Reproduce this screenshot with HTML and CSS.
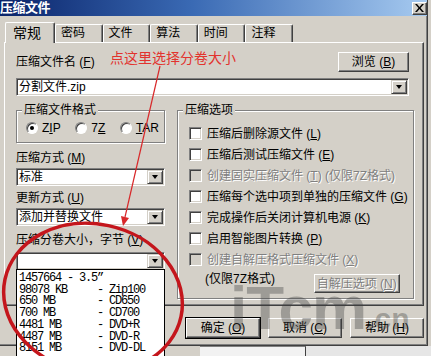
FILE: index.html
```html
<!DOCTYPE html>
<html lang="zh-CN">
<head>
    <meta charset="UTF-8">
    <title>压缩文件</title>
    <link rel="stylesheet" href="styles.css">
</head>
<body>
    <div class="dialog">
        <div class="titlebar">
            <span class="title">压缩文件</span>
            <span class="close">
                <svg width="9" height="8" viewBox="0 0 9 8"><path d="M0 0h2l2.5 3 2.5-3h2l-3.5 4 3.5 4h-2l-2.5-3-2.5 3h-2l3.5-4z" fill="#000"/></svg>
            </span>
        </div>

        <!-- Tabs -->
        <div class="tabs">
            <div class="tab active">常规</div>
            <div class="tab">密码</div>
            <div class="tab">文件</div>
            <div class="tab">算法</div>
            <div class="tab">时间</div>
            <div class="tab">注释</div>
        </div>

        <div class="panel">
            <div class="name-row">
                <span>压缩文件名 (<u>F</u>)</span>
                <button class="btn browse">浏览 (<u>B</u>)</button>
            </div>
            <div class="combo wide"><span class="combo-text">分割文件.zip</span><span class="arrow"></span></div>

            <div class="cols">
                <div class="col-left">
                    <fieldset class="group format">
                        <legend>压缩文件格式</legend>
                        <div class="radios">
                            <label class="radio r-zip"><span class="dot on"></span><span>Z<u>I</u>P</span></label>
                            <label class="radio r-7z"><span class="dot"></span><span>7<u>Z</u></span></label>
                            <label class="radio"><span class="dot"></span><span><u>T</u>AR</span></label>
                        </div>
                    </fieldset>

                    <div class="field-label first">压缩方式 (<u>M</u>)</div>
                    <div class="combo"><span class="combo-text">标准</span><span class="arrow"></span></div>

                    <div class="field-label">更新方式 (<u>U</u>)</div>
                    <div class="combo"><span class="combo-text">添加并替换文件</span><span class="arrow"></span></div>

                    <div class="field-label last">压缩分卷大小，字节 (<u>V</u>)</div>
                    <div class="combo"><span class="combo-text"></span><span class="arrow"></span></div>
                </div>

                <div class="col-right">
                    <fieldset class="group options">
                        <legend>压缩选项</legend>
                        <div class="check-row"><span class="check"></span><span>压缩后删除源文件 (<u>L</u>)</span></div>
                        <div class="check-row"><span class="check"></span><span>压缩后测试压缩文件 (<u>E</u>)</span></div>
                        <div class="check-row disabled"><span class="check"></span><span>创建固实压缩文件 (<u>T</u>) (仅限7Z格式)</span></div>
                        <div class="check-row"><span class="check"></span><span>压缩每个选中项到单独的压缩文件 (<u>G</u>)</span></div>
                        <div class="check-row"><span class="check"></span><span>完成操作后关闭计算机电源 (<u>K</u>)</span></div>
                        <div class="check-row"><span class="check"></span><span>启用智能图片转换 (<u>P</u>)</span></div>
                        <div class="check-row disabled"><span class="check"></span><span>创建自解压格式压缩文件 (<u>X</u>)</span></div>
                        <div class="sfx-row">
                            <span>(仅限7Z格式)</span>
                            <button class="btn sfx" disabled>自解压选项 (<u>N</u>)</button>
                        </div>
                    </fieldset>
                </div>
            </div>
        </div>

        <div class="buttons">
            <button class="btn action default">确定 (<u>O</u>)</button>
            <button class="btn action">取消 (<u>C</u>)</button>
            <button class="btn action">帮助 (<u>H</u>)</button>
        </div>
    </div>

    <div class="under">
        <div class="under-gray"></div>
        <div class="under-box"></div>
        <div class="under-dither"></div>
    </div>

    <!-- Open dropdown list of the volume size combo -->
    <div class="listbox">
        <div class="item">1457664 - 3.5”</div>
        <div class="item">98078 KB     - Zip100</div>
        <div class="item">650 MB       - CD650</div>
        <div class="item">700 MB       - CD700</div>
        <div class="item">4481 MB      - DVD+R</div>
        <div class="item">4487 MB      - DVD-R</div>
        <div class="item">8151 MB      - DVD-DL</div>
    </div>

    <!-- Annotations drawn over the screenshot -->
    <div class="note">点这里选择分卷大小</div>
    <svg class="marks" width="431" height="356" viewBox="0 0 431 356">
        <line x1="160" y1="66" x2="125" y2="217" stroke="#d8282a" stroke-width="1.2"/>
        <polygon points="123,226 121,216 129,218" fill="#d8282a"/>
        <ellipse cx="93" cy="298" rx="90" ry="74" transform="rotate(12 93 298)" fill="none" stroke="#c4161c" stroke-width="3.5"/>
    </svg>

    <div class="watermark">iTcm<span class="wm-small">.cn</span></div>
</body>
</html>
```

FILE: styles.css
```css
* {
    box-sizing: border-box;
}

body {
    margin: 0;
    width: 431px;
    height: 356px;
    overflow: hidden;
    position: relative;
    background: #d4d0c8;
    color: #000;
    font: 12px/14px "Liberation Sans", "Noto Sans CJK SC", sans-serif;
}

u {
    text-decoration: underline;
    text-underline-offset: 1px;
}

/* Dialog frame */
.dialog {
    width: 428px;
    height: 346px;
    border-right: 1px solid #404040;
    border-bottom: 1px solid #404040;
    box-shadow: inset -1px -1px 0 #808080;
}

.titlebar {
    height: 16px;
    display: flex;
    justify-content: space-between;
    align-items: center;
    background: linear-gradient(to right, #0a246a, #3a6ab4 45%, #a6caf0);
}

.title {
    color: #fff;
    font-weight: bold;
    font-size: 13px;
    line-height: 16px;
    letter-spacing: -0.5px;
}

.close {
    width: 15px;
    height: 13px;
    display: flex;
    align-items: center;
    justify-content: center;
    background: #d4d0c8;
    border: 1px solid;
    border-color: #fff #404040 #404040 #fff;
    box-shadow: inset -1px -1px 0 #808080;
}

/* Tabs */
.tabs {
    display: flex;
    align-items: flex-end;
    height: 20px;
    margin-top: 6px;
    padding-left: 5px;
}

.tab {
    width: 47.6px;
    height: 18px;
    padding-left: 5px;
    line-height: 17px;
    border: 1px solid;
    border-color: #fff #404040 transparent #fff;
    border-bottom: none;
    border-radius: 2px 2px 0 0;
    box-shadow: inset -1px 0 0 #808080;
}

.tab.active {
    width: 50px;
    height: 21px;
    margin-bottom: -1px;
    padding-left: 7px;
    font-size: 14px;
    line-height: 20px;
    background: #d4d0c8;
    position: relative;
    z-index: 1;
}

.panel {
    width: 420px;
    height: 264px;
    margin-left: 4px;
    padding: 9px 12px 0 11px;
    border: 1px solid;
    border-color: #fff #404040 #404040 #fff;
    box-shadow: inset -1px -1px 0 #808080;
}

.name-row {
    height: 20px;
    margin-right: 2px;
    display: flex;
    align-items: center;
    justify-content: space-between;
}

/* Buttons */
.btn {
    font: inherit;
    color: #000;
    height: 20px;
    padding: 0;
    background: #d4d0c8;
    border: 1px solid;
    border-color: #fff #404040 #404040 #fff;
    box-shadow: inset -1px -1px 0 #808080;
}

.browse {
    width: 71px;
}

.btn:disabled {
    color: #808080;
    text-shadow: 1px 1px 0 #fff;
}

/* Combo boxes */
.combo {
    height: 18px;
    display: flex;
    background: #fff;
    border: 1px solid;
    border-color: #808080 #fff #fff #808080;
    box-shadow: inset 1px 1px 0 #404040, inset -1px -1px 0 #d4d0c8;
}

.combo.wide {
    margin-top: 6px;
    margin-right: 2px;
}

.combo-text {
    flex: 1;
    padding-left: 2px;
    line-height: 16px;
    white-space: nowrap;
}

.arrow {
    width: 16px;
    margin: 1px 1px 1px 0;
    display: flex;
    align-items: center;
    justify-content: center;
    background: #d4d0c8;
    border: 1px solid;
    border-color: #d4d0c8 #404040 #404040 #d4d0c8;
    box-shadow: inset 1px 1px 0 #fff, inset -1px -1px 0 #808080;
}

.arrow::before {
    content: "";
    border-left: 3.5px solid transparent;
    border-right: 3.5px solid transparent;
    border-top: 4px solid #000;
}

/* Two columns */
.cols {
    display: flex;
    gap: 12px;
    margin-top: 8px;
}

.col-left {
    width: 149px;
}

.col-right {
    flex: 1;
}

.group {
    margin: 0;
    min-width: 0;
    padding: 0 5px;
    border: 1px solid #808080;
    box-shadow: 1px 1px 0 #fff, inset 1px 1px 0 #fff;
}

.group legend {
    padding: 0 2px;
    line-height: 12px;
    background: #d4d0c8;
}

.radios {
    display: flex;
    align-items: center;
    height: 12px;
    margin: 6px 0 8px 4px;
}

.radio {
    display: flex;
    align-items: center;
    gap: 4px;
    line-height: 12px;
}

.r-zip {
    width: 51px;
}

.r-7z {
    width: 46px;
}

.dot {
    width: 12px;
    height: 12px;
    display: flex;
    align-items: center;
    justify-content: center;
    border-radius: 50%;
    background: #fff;
    border: 1px solid;
    border-color: #808080 #fff #fff #808080;
    box-shadow: inset 1px 1px 0 #404040;
}

.dot.on::before {
    content: "";
    width: 4px;
    height: 4px;
    border-radius: 50%;
    background: #000;
}

.field-label {
    margin: 5px 0 3px;
}

.field-label.first {
    margin-top: 8px;
}

.field-label.last {
    margin: 7px 0 5px;
}

.options {
    padding-top: 7px;
    padding-bottom: 5px;
}

.check-row {
    height: 21px;
    display: flex;
    align-items: center;
    gap: 5px;
    margin-left: 6px;
    white-space: nowrap;
}

.check {
    width: 13px;
    height: 13px;
    flex: none;
    background: #fff;
    border: 1px solid;
    border-color: #808080 #fff #fff #808080;
    box-shadow: inset 1px 1px 0 #404040, inset -1px -1px 0 #d4d0c8;
}

.check-row.disabled {
    color: #808080;
    text-shadow: 1px 1px 0 #fff;
}

.check-row.disabled .check {
    background: #d4d0c8;
}

.sfx-row {
    display: flex;
    align-items: flex-start;
    justify-content: space-between;
    margin: 2px 0 0 22px;
}

.sfx {
    width: 86px;
    height: 19px;
    margin: 2px 8px 0 0;
}

/* OK / Cancel / Help */
.buttons {
    display: flex;
    justify-content: flex-end;
    gap: 8px;
    margin-top: 12px;
    padding-right: 3px;
}

.action {
    width: 74px;
    height: 20px;
}

.action.default {
    outline: 1px solid #000;
}

/* Window below the dialog */
.under {
    display: flex;
    height: 10px;
}

.under-gray {
    width: 200px;
}

.under-box {
    width: 106px;
    background: #f2f2f2;
    border-top: 1px solid #808080;
    border-right: 1px solid #404040;
}

.under-dither {
    flex: 1;
    background: #e6e6e6;
}

/* Dropdown list popup */
.listbox {
    position: absolute;
    left: 16px;
    top: 269px;
    width: 149px;
    height: 87px;
    overflow: hidden;
    padding: 3px 0 0 2px;
    background: #fff;
    border: 1px solid #000;
    border-bottom: none;
    font: 12px/11.7px "Liberation Mono", monospace;
    letter-spacing: -1.2px;
}

.listbox .item {
    white-space: pre;
}

/* Annotations */
.note {
    position: absolute;
    left: 110px;
    top: 50px;
    color: #e2332e;
    font-family: "Noto Sans CJK SC", sans-serif;
    font-size: 14px;
    line-height: 14px;
}

.marks {
    position: absolute;
    left: 0;
    top: 0;
    pointer-events: none;
}

.watermark {
    position: absolute;
    left: 230px;
    top: 276px;
    font: bold 62px/64px "Liberation Sans", sans-serif;
    color: rgba(60, 60, 60, 0.36);
    letter-spacing: -1px;
}

.wm-small {
    font-size: 30px;
    letter-spacing: 0;
}
```
